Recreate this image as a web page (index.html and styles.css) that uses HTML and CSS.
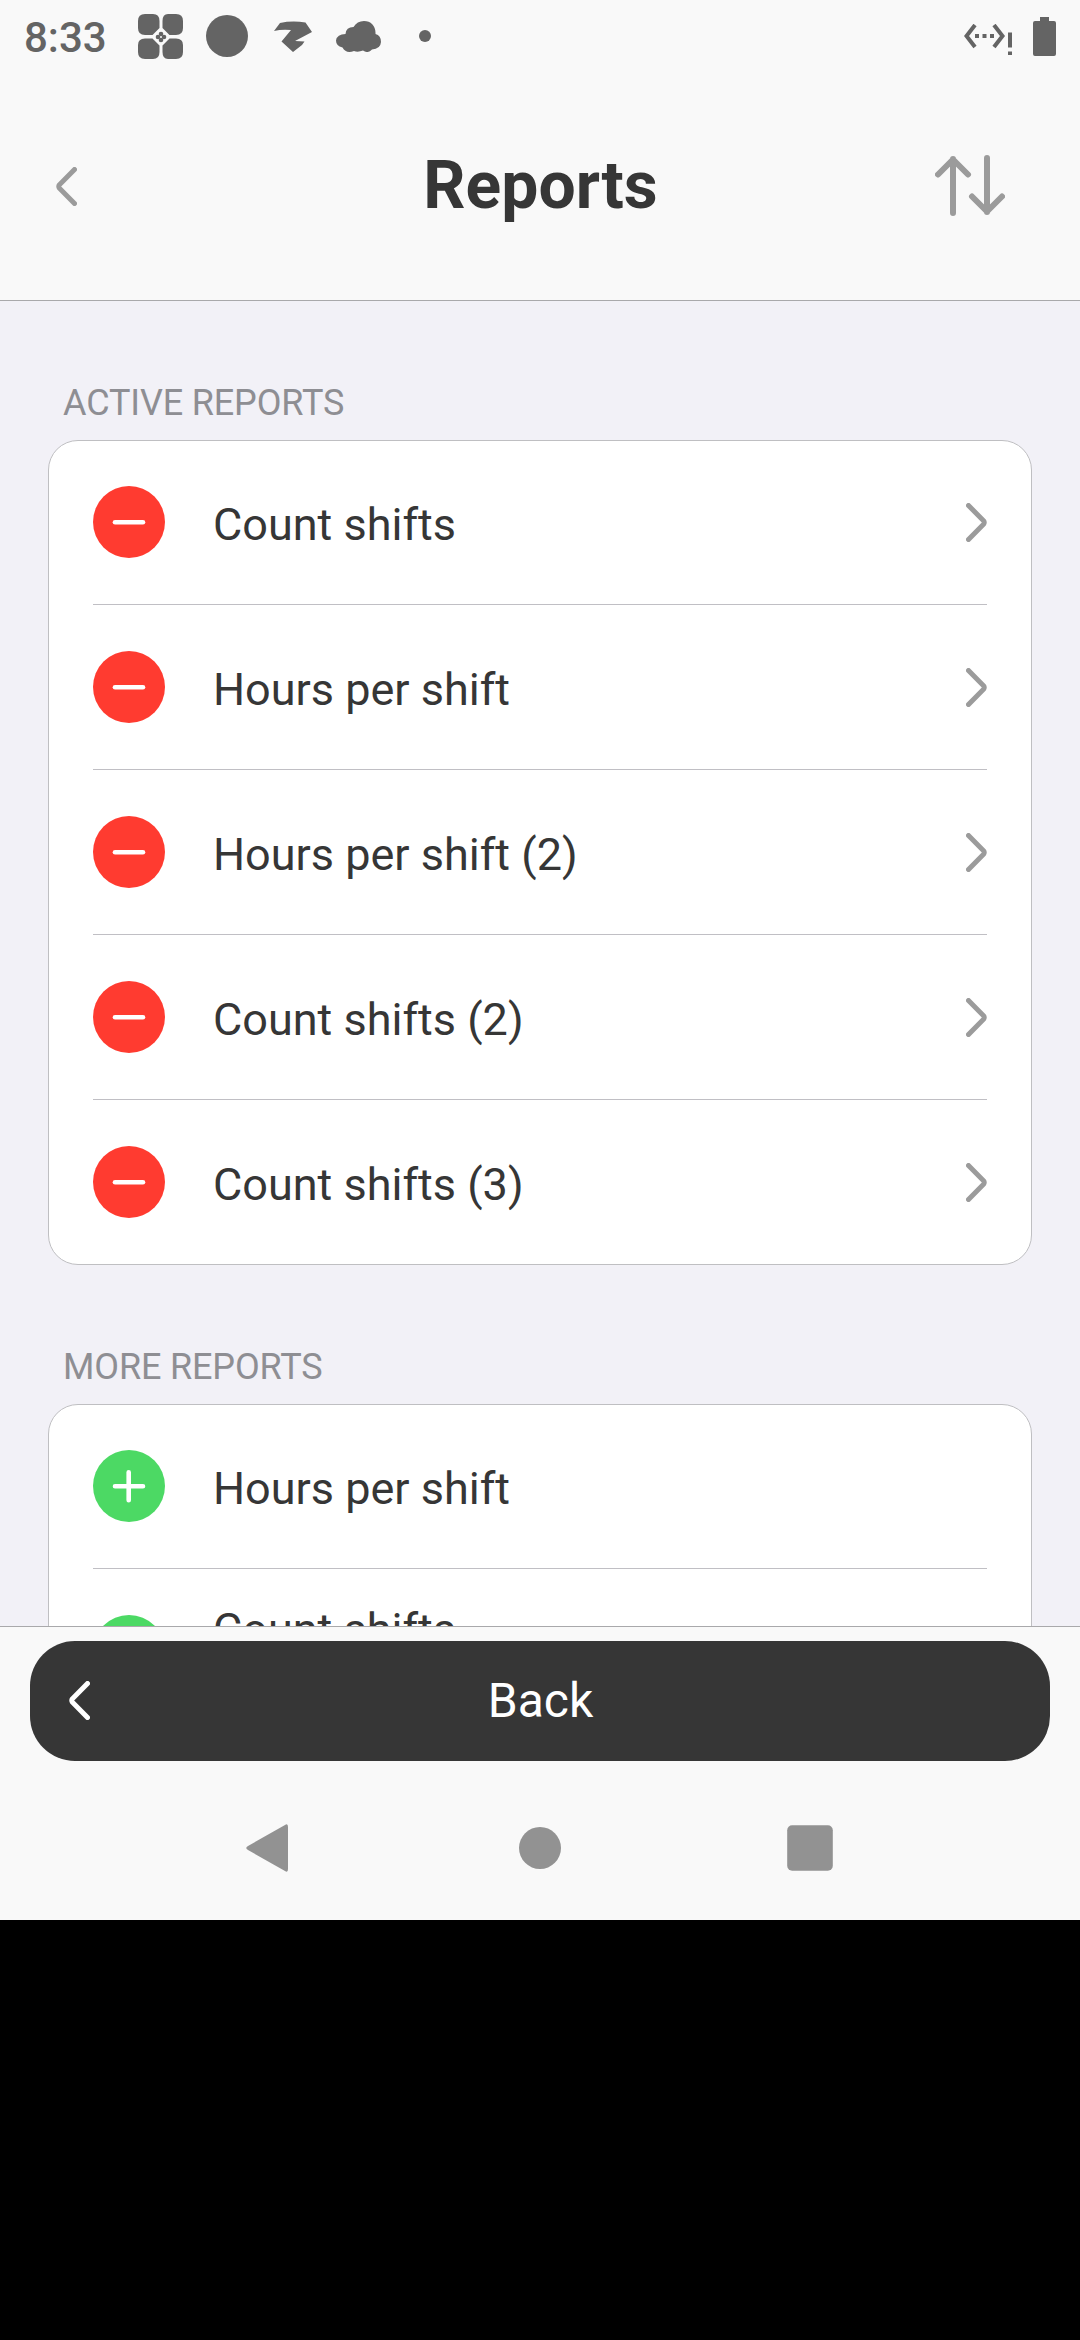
FILE: index.html
```html
<!DOCTYPE html>
<html lang="en">
<head>
<meta charset="utf-8">
<title>Reports</title>
<link rel="stylesheet" href="styles.css">
</head>
<body>
<svg width="0" height="0" class="defs">
  <symbol id="chevron-right" viewBox="0 0 21 39"><path d="M2.5 2.5L17.6 17.8Q18.8 19.5 17.6 21.2L2.5 36.5"/></symbol>
  <symbol id="chevron-left" viewBox="0 0 21 39"><path d="M18.5 2.5L3.4 17.8Q2.2 19.5 3.4 21.2L18.5 36.5"/></symbol>
  <symbol id="minus" viewBox="0 0 72 72"><path d="M22 36.3H50"/></symbol>
  <symbol id="plus" viewBox="0 0 72 72"><path d="M22 36.3H50M35.7 22.3V50.3"/></symbol>
</svg>
<div class="screen">
  <div class="status">
    <span class="clock">8:33</span>
    <svg class="st-grid" width="45" height="45" viewBox="0 0 45 45">
      <path d="M7 0H15Q21.500 0 21.500 7V14L14.500 21H7Q0 21 0 14V7Q0 0 7 0ZM30 0H38Q45 0 45 7V14Q45 21 38 21H31.500L24.500 14V7Q24.500 0 30 0ZM7 24.500H14.500L21.500 31.500V38Q21.500 45 15 45H7Q0 45 0 38V31Q0 24.500 7 24.500ZM31.500 24.500H38Q45 24.500 45 31V38Q45 45 38 45H30Q24.500 45 24.500 38V31.500Z"/>
      <path class="gap" d="M23 15.500L30.500 23L23 30.500L15.500 23Z"/>
      <circle cx="23" cy="20" r="2.300"/><circle cx="26" cy="23" r="2.300"/><circle cx="23" cy="26" r="2.300"/><circle cx="20" cy="23" r="2.300"/>
    </svg>
    <svg class="st-circle" width="42" height="42" viewBox="0 0 42 42"><circle cx="21" cy="21" r="21"/></svg>
    <svg class="st-bolt" width="38" height="31" viewBox="0 0 38 31"><path d="M6 2Q18-.5 31.500 1.500L38 11L21 20L30.500 20.500L28 24L19 31L7.500 20.500L17 9Q8 8 0 10Z"/></svg>
    <svg class="st-cloud" width="45" height="31" viewBox="0 0 45 31"><path d="M9.500 13Q10 6 17.500 6Q21 0 28 0C35 0 40 5 39.500 13Q45 14.500 45 21Q44.500 28 36 28.500Q32 33 27 29.500Q22 31.500 18 30Q10 33 6.500 26.500Q0 25 0 19.500Q1 13 9.500 13Z"/></svg>
    <svg class="st-dot" width="12" height="12" viewBox="0 0 12 12"><circle cx="6" cy="6" r="6"/></svg>
    <svg class="st-net" width="48" height="31" viewBox="0 0 48 31">
      <path class="line" d="M11 1L2.500 12L11 23M30 1L38.500 12L30 23"/>
      <path d="M11 10h4v4h-4zM18.500 10h4v4h-4zM26 10h4v4h-4zM44 8.500h4v15h-4zM44 27.500h4v3.500h-4z"/>
    </svg>
    <svg class="st-battery" width="23" height="39" viewBox="0 0 23 39"><path d="M7 0H16V4H21Q23 4 23 6V37Q23 39 21 39H2Q0 39 0 37V6Q0 4 2 4H7Z"/></svg>
  </div>
  <header class="header">
    <svg class="chevron" width="21" height="39"><use href="#chevron-left"/></svg>
    <h1 class="title">Reports</h1>
    <svg class="sort" width="70" height="61" viewBox="0 0 70 61"><path d="M18 58V4M3 19.500L18 4.500L33 19.500M52 3V57M37 41.500L52 56.500L67 41.500"/></svg>
  </header>
  <main class="content">
    <h2 class="label">ACTIVE REPORTS</h2>
    <ul class="card">
      <li class="row"><svg class="badge remove"><use href="#minus"/></svg><span class="name">Count shifts</span><svg class="chevron" width="21" height="39"><use href="#chevron-right"/></svg></li>
      <li class="row"><svg class="badge remove"><use href="#minus"/></svg><span class="name">Hours per shift</span><svg class="chevron" width="21" height="39"><use href="#chevron-right"/></svg></li>
      <li class="row"><svg class="badge remove"><use href="#minus"/></svg><span class="name">Hours per shift (2)</span><svg class="chevron" width="21" height="39"><use href="#chevron-right"/></svg></li>
      <li class="row"><svg class="badge remove"><use href="#minus"/></svg><span class="name">Count shifts (2)</span><svg class="chevron" width="21" height="39"><use href="#chevron-right"/></svg></li>
      <li class="row"><svg class="badge remove"><use href="#minus"/></svg><span class="name">Count shifts (3)</span><svg class="chevron" width="21" height="39"><use href="#chevron-right"/></svg></li>
    </ul>
    <h2 class="label">MORE REPORTS</h2>
    <ul class="card">
      <li class="row"><svg class="badge add"><use href="#plus"/></svg><span class="name">Hours per shift</span></li>
      <li class="row"><svg class="badge add"><use href="#plus"/></svg><span class="name name-raised">Count shifts</span></li>
    </ul>
  </main>
  <footer class="footer">
    <button class="back"><svg class="chevron" width="21" height="39"><use href="#chevron-left"/></svg><span class="back-text">Back</span></button>
  </footer>
  <nav class="nav">
    <svg class="nav-back" width="48" height="48" viewBox="0 0 48 48"><path d="M42 1Q45 -1 45 3V45Q45 49 42 47L5 26Q1.500 24 5 22Z"/></svg>
    <svg width="48" height="48" viewBox="0 0 48 48"><circle cx="24" cy="24" r="21"/></svg>
    <svg width="48" height="48" viewBox="0 0 48 48"><rect x="1.200" y="1.200" width="45.600" height="45.600" rx="5"/></svg>
  </nav>
</div>
</body>
</html>
```

FILE: styles.css
```css
* { box-sizing: border-box; }
body { margin: 0; background: #000; font-family: Roboto, sans-serif; color: #363636; }
.defs { display: block; }
svg { flex: none; }
.screen { width: 1080px; height: 1920px; display: flex; flex-direction: column; background: #f9f9f9; }

.status { height: 72px; display: flex; align-items: center; padding: 0 24px; fill: #646464; }
.clock { width: 114px; font-size: 42px; font-weight: 500; line-height: 50px; color: #646464; padding-top: 3px; }
.gap { fill: #f9f9f9; }
.st-circle { margin-left: 23px; }
.st-bolt { margin-left: 26px; }
.st-cloud { margin-left: 24px; }
.st-dot { margin-left: 38px; }
.st-net { margin-left: auto; margin-top: 7px; }
.st-battery { margin-left: 21px; margin-right: 0; }
.line { fill: none; stroke: #646464; stroke-width: 4; }

.header { height: 229px; display: flex; justify-content: space-between; padding: 83px 75px 0 56px; border-bottom: 1px solid #a9a9ab; }
.title { margin: -8px 0 0 69px; font-size: 66px; line-height: 78px; font-weight: 700; }
.chevron { fill: none; stroke: #9b9b9b; stroke-width: 5; stroke-linecap: round; margin-top: 12px; }
.sort { fill: none; stroke: #9b9b9b; stroke-width: 6; stroke-linecap: round; stroke-linejoin: round; }

.content { flex: none; height: 1325px; overflow: hidden; background: #f2f1f7; padding: 81px 48px 0; }
.label { margin: 0 0 15px 15px; font-size: 36px; line-height: 43px; font-weight: 400; letter-spacing: -0.15px; color: #8e8e93; }
.card { list-style: none; margin: 0 0 81px; padding: 0 44px; border: 1px solid #bfbfc2; border-radius: 30px; background: #fff; }
.row { height: 165px; display: flex; align-items: flex-start; border-bottom: 1px solid #c0bfc4; padding-top: 46px; }
.row:first-child { height: 164px; padding-top: 45px; }
.row:last-child { height: 164px; border-bottom: 0; }
.row .chevron { margin-top: 17px; }
.badge { width: 72px; height: 72px; border-radius: 50%; fill: none; stroke: #fff; stroke-width: 4.6; stroke-linecap: round; }
.remove { background: #ff3b30; }
.add { background: #4cd964; }
.name { flex: 1; margin: 12px 0 0 48px; font-size: 45px; line-height: 53px; }
.name-raised { margin-top: -12px; }

.footer { height: 150px; padding: 14px 30px 0; border-top: 1px solid #a9a9ab; }
.back { display: flex; align-items: center; width: 100%; height: 120px; padding: 0 39px; border: 0; border-radius: 45px; background: #363636; color: #fff; font: 400 48px/56px Roboto, sans-serif; }
.back .chevron { stroke: #fff; margin: 0 0 1px; }
.back-text { flex: 1; padding-right: 20px; text-align: center; }
.nav { flex: 1; display: flex; align-items: center; justify-content: space-around; padding: 0 135px; fill: #929292; }
.nav-back { margin: 0 3px 0 -3px; }
```
